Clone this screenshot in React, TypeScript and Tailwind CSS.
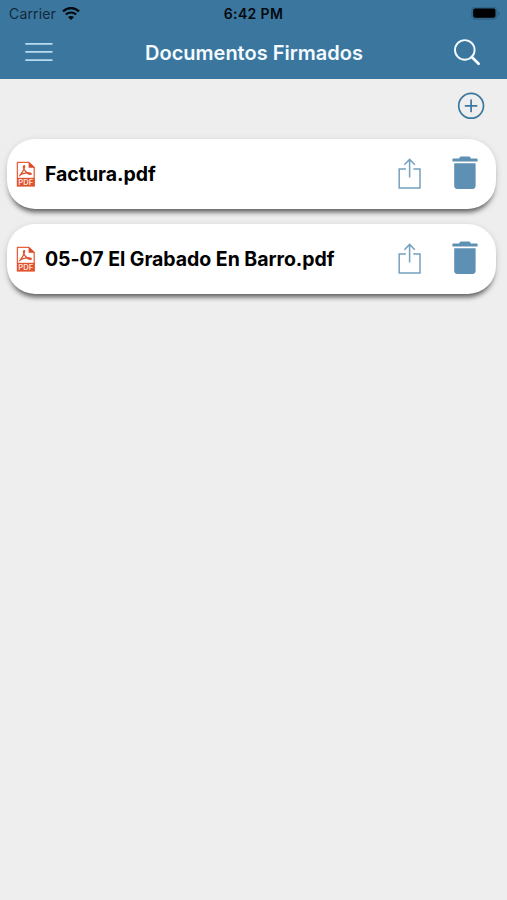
const documents = ['Factura.pdf', '05-07 El Grabado En Barro.pdf']

const WifiIcon = () => (
  <svg className="w-[18px] h-[14px]" viewBox="0 0 18 14" fill="none">
    <path d="M1 4.3C5.6 0 12.4 0 17 4.3" stroke="#04090d" strokeWidth="2.4" />
    <path d="M3.8 7.5c3-2.7 7.4-2.7 10.4 0" stroke="#04090d" strokeWidth="2.2" />
    <path d="M9 13 6 10c1.6-1.5 4.4-1.5 6 0z" fill="#04090d" />
  </svg>
)

const BatteryIcon = () => (
  <svg className="w-[30px] h-[14px]" viewBox="0 0 30 14">
    <rect x=".6" y=".1" width="25.4" height="12.4" rx="4" fill="#326583" stroke="#2f678a" strokeWidth="1.2" />
    <rect x="2.2" y="1.6" width="22.2" height="9.2" rx="2" fill="#000" />
    <path d="M27.2 4.4c2 .6 2 3.6 0 4.2z" fill="#2b5f80" />
  </svg>
)

const MenuIcon = () => (
  <svg className="w-[28px] h-[20px]" viewBox="0 0 28 20" stroke="#b9dbef" strokeWidth="1.7">
    <path d="M.3 1.8h27.2M.3 9.9h27.2M.3 18.1h27.2" />
  </svg>
)

const SearchIcon = () => (
  <svg className="w-[28px] h-[28px]" viewBox="0 0 28 28" fill="none" stroke="#f4fbff">
    <circle cx="11.8" cy="11.9" r="9.8" strokeWidth="1.9" />
    <path d="m18.8 19 6.8 6.8" strokeWidth="2.7" strokeLinecap="round" />
  </svg>
)

const AddIcon = () => (
  <svg className="w-[28px] h-[28px]" viewBox="0 0 28 28" fill="none" stroke="#3b779f" strokeWidth="1.7">
    <circle cx="14.1" cy="13.8" r="12.4" />
    <path d="M14.1 8.2v11.2M8.5 13.8h11.2" strokeLinecap="round" />
  </svg>
)

const PdfIcon = () => (
  <svg className="w-[19px] h-[26px]" viewBox="0 0 19 26" fill="none">
    <path d="M1.4 17V1.4h11.3L18.2 6.6V17" fill="#fff" stroke="#e8613f" strokeWidth="1.3" />
    <path d="M12.6.8v6H19z" fill="#dc4a28" />
    <path
      d="M3.8 14.8c1.3-2.4 5.3-6.2 4.7-10.2-1.7-.3-1.2 3 .4 5 1.6 2.2 4 4 6.4 3.6 .2-1.6-3.6-1.7-6-1.1-2.2.4-5 1.2-5.5 2.7z"
      stroke="#df5230"
      strokeWidth="1.3"
      strokeLinejoin="round"
    />
    <path d="M.8 16.8h18.1v8.8H.8z" fill="#e2512d" />
    <text
      x="9.8"
      y="24"
      textAnchor="middle"
      textLength="15"
      fill="#ffe3da"
      className="font-['Inter',sans-serif] text-[7.6px] font-semibold"
    >
      PDF
    </text>
  </svg>
)

const ShareIcon = () => (
  <svg className="w-[24px] h-[32px]" viewBox="0 0 24 32" fill="none" stroke="#74a1c0" strokeWidth="1.5">
    <path d="M8.9 11.1H2.2v18.8H23V11.1h-6.7" />
    <path d="M12.6 19.6V1.6M7.4 6.8l5.2-5.4 5.2 5.4" />
  </svg>
)

const TrashIcon = () => (
  <svg className="w-[26px] h-[34px]" viewBox="0 0 26 34" fill="#5e90b4">
    <path d="M7.2 2.4C7.6.9 8.2.5 9.6.5h6.8c1.4 0 2 .4 2.4 1.9h5.8c.6 0 1 .3 1 .8v2.3H.4V3.2c0-.5.4-.8 1-.8z" />
    <path d="M2.2 7.3h21.4v22.4c0 2-1 3.2-3 3.2H5.2c-2 0-3-1.2-3-3.2z" />
  </svg>
)

const DocumentRow = ({ name }: { name: string }) => (
  <li className="flex items-center h-[70px] pl-[9px] pr-[18px] bg-white rounded-[28px] shadow-[0_6px_5px_-3px_rgba(0,0,0,0.55),0_2px_7px_rgba(0,0,0,0.15)]">
    <PdfIcon />
    <span className="flex-1 ml-[10px] text-[19.5px] leading-6 font-bold tracking-[-0.04px] text-black whitespace-nowrap">
      {name}
    </span>
    <button className="mr-[31px]" aria-label="Compartir">
      <ShareIcon />
    </button>
    <button className="-mt-[3px]" aria-label="Eliminar">
      <TrashIcon />
    </button>
  </li>
)

const App = () => {
  return (
    <div className="h-screen flex flex-col bg-[#eeeeee] font-['Inter',sans-serif]">
      <header className="h-[79px] bg-[#3b769f]">
        <div className="grid grid-cols-3 items-center h-[27px] pl-[9px] pr-[6px] text-[14px] leading-none text-[#04090d]">
          <div className="flex items-center gap-[6px]">
            <span className="text-[#12293a] tracking-[0.15px]">Carrier</span>
            <WifiIcon />
          </div>
          <span className="-ml-[3px] text-center font-semibold tracking-[0.35px]">6:42 PM</span>
          <div className="flex justify-end">
            <BatteryIcon />
          </div>
        </div>
        <nav className="flex justify-between items-center h-[50px] pl-[25px] pr-[26px]">
          <button aria-label="Menú">
            <MenuIcon />
          </button>
          <h1 className="pt-px pl-[2px] text-[20px] font-semibold text-[#f4fbff]">Documentos Firmados</h1>
          <button aria-label="Buscar">
            <SearchIcon />
          </button>
        </nav>
      </header>
      <main className="flex-1">
        <div className="flex justify-end h-[60px] pt-[13px] pr-[22px]">
          <button className="self-start" aria-label="Añadir">
            <AddIcon />
          </button>
        </div>
        <ul className="flex flex-col gap-[15px] pl-[7px] pr-[11px]">
          {documents.map((name) => (
            <DocumentRow key={name} name={name} />
          ))}
        </ul>
      </main>
    </div>
  )
}

export default App
